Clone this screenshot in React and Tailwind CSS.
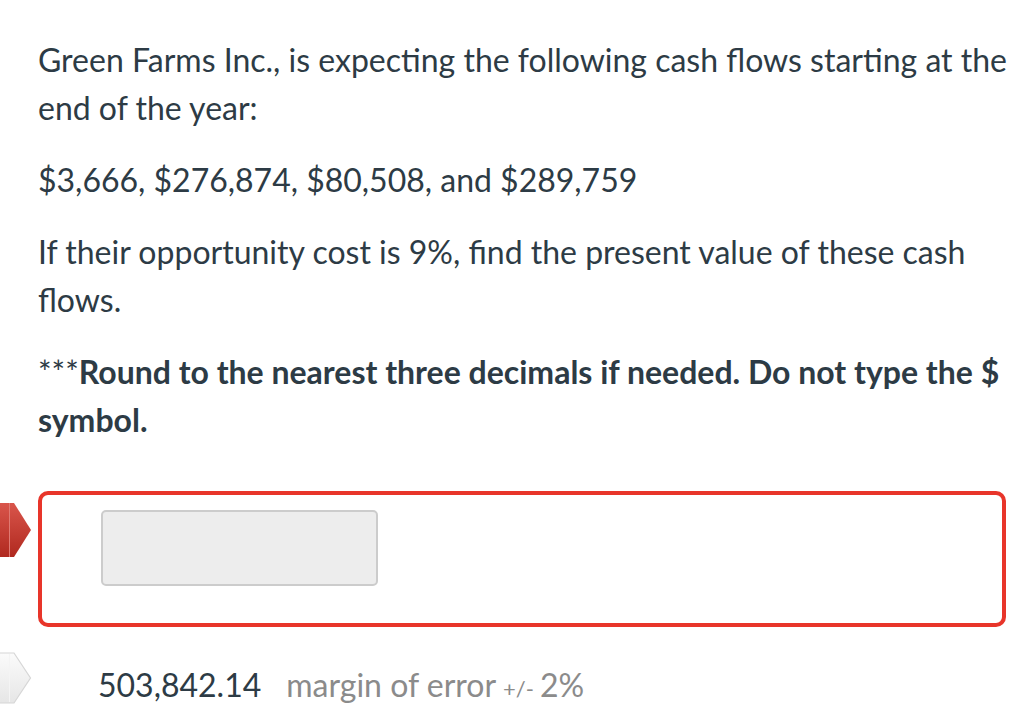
function RedArrow() {
  return (
    <svg width="32" height="56" viewBox="0 0 32 56" className="block">
      <defs>
        <linearGradient id="redg" x1="0" y1="0" x2="0" y2="1">
          <stop offset="0" stopColor="#d9554b" />
          <stop offset="1" stopColor="#b0291f" />
        </linearGradient>
      </defs>
      <path d="M0 1 H14 L31 28 L14 55 H0 Z" fill="url(#redg)" />
      <line x1="9.5" y1="1" x2="9.5" y2="55" stroke="#e07a72" strokeWidth="1" />
    </svg>
  )
}

function WhiteArrow() {
  return (
    <svg width="32" height="52" viewBox="0 0 32 52" className="block">
      <defs>
        <linearGradient id="whg" x1="0" y1="0" x2="0" y2="1">
          <stop offset="0" stopColor="#fbfbfb" />
          <stop offset="1" stopColor="#e6e6e6" />
        </linearGradient>
      </defs>
      <path d="M-1 1 H14 L30.5 26 L14 51 H-1 Z" fill="url(#whg)" stroke="#d6d6d6" strokeWidth="1.2" />
      <line x1="9.5" y1="2" x2="9.5" y2="50" stroke="#f4f4f4" strokeWidth="1" />
    </svg>
  )
}

export default function App() {
  return (
    <div className="h-[712px] w-[1036px] overflow-hidden bg-white text-[32px] leading-[48px] text-[#2d3b45] [font-family:Lato,'Open_Sans',sans-serif]">
      <div className="pl-[38px] pt-[36px] w-[1012px]">
        <p>Green Farms Inc., is expecting the following cash flows starting at the end of the year:</p>
        <p className="mt-[24px]">$3,666, $276,874, $80,508, and $289,759</p>
        <p className="mt-[24px]">If their opportunity cost is 9%, find the present value of these cash flows.</p>
        <p className="mt-[24px]">
          <span>***</span><strong className="font-bold">Round to the nearest three decimals if needed. Do not type the $ symbol.</strong>
        </p>
      </div>

      <div className="mt-[47px] flex items-start">
        <div className="w-[38px] shrink-0 pt-[11px]">
          <RedArrow />
        </div>
        <div className="h-[136px] w-[968px] rounded-[10px] border-4 border-[#e8352a] pl-[59px] pt-[15px]">
          <div className="h-[76px] w-[277px] rounded-[5px] border-2 border-[#cccccc] bg-[#ededed]" />
        </div>
      </div>

      <div className="mt-[25px] flex items-start">
        <div className="w-[98px] shrink-0">
          <WhiteArrow />
        </div>
        <div className="flex items-baseline pt-[9px]">
          <span>503,842.14</span>
          <span className="ml-[25px] text-[#8b8b8b]">margin of error</span>
          <span className="ml-[7px] text-[22px] text-[#8b8b8b]">+/-</span>
          <span className="ml-[6px] text-[#8b8b8b]">2%</span>
        </div>
      </div>
    </div>
  )
}
